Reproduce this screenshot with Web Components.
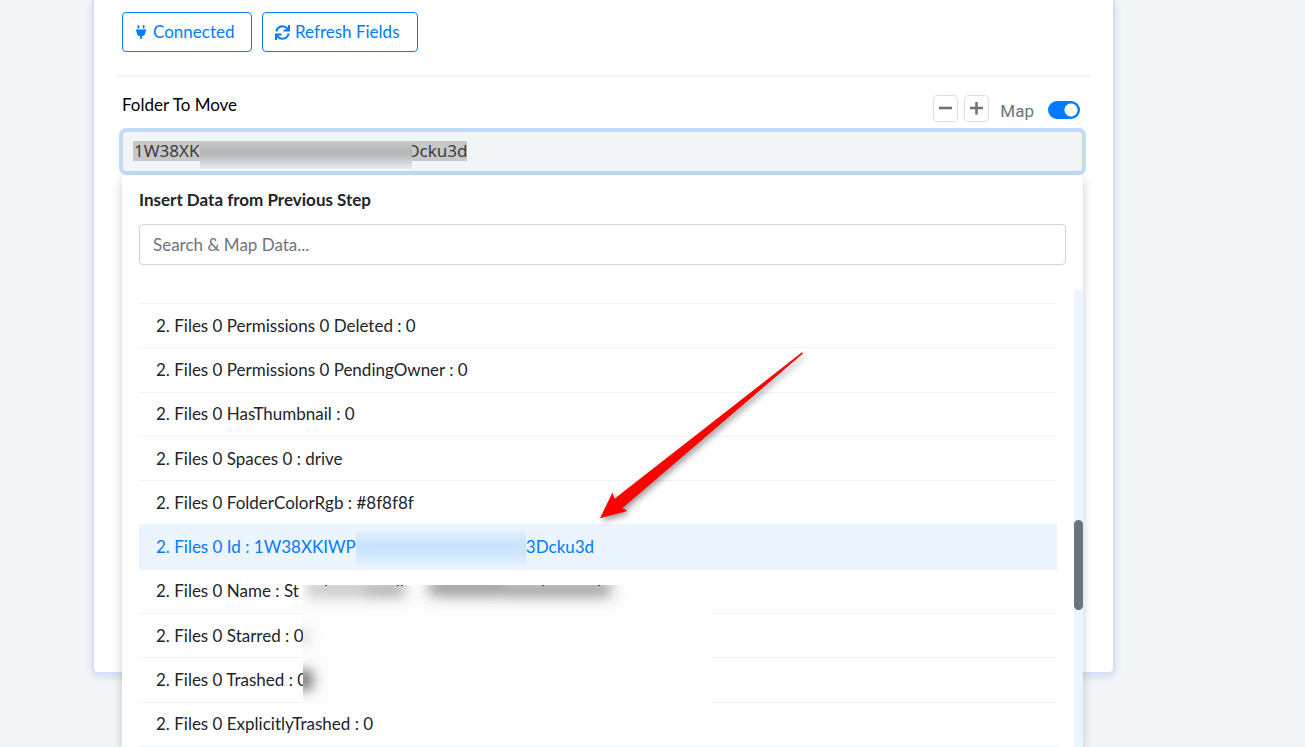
<!DOCTYPE html>
<html lang="en">
<head>
<meta charset="utf-8">
<title>Workflow step</title>
<style>
body { margin: 0; height: 100vh; overflow: hidden; background: #f3f6f9; color: #212529; font: 17px/24px Lato, "Open Sans", sans-serif; }
</style>
</head>
<body>
<step-card>
  <step-actions></step-actions>
  <map-field>
    <data-picker></data-picker>
  </map-field>
</step-card>

<script>
class Base extends HTMLElement {
  constructor() {
    super();
    this.attachShadow({ mode: 'open' }).innerHTML = this.constructor.markup;
  }
}

customElements.define('step-card', class extends Base {
  static markup = `
    <style>
      :host { display: block; box-sizing: border-box; height: calc(100vh - 73px); margin: 0 190px 0 92px; padding: 12px 22px;
        background: #fff; border: 2px solid #d3e0fd; border-top: 0; border-radius: 0 0 6px 6px; box-shadow: 0 3px 8px rgba(60,80,110,.16); }
    </style>
    <slot></slot>`;
});

customElements.define('step-actions', class extends Base {
  static markup = `
    <style>
      :host { display: flex; gap: 10px; padding: 0 6px 23px; border-bottom: 2px solid #eef6ff; }
      button { display: flex; align-items: center; box-sizing: border-box; height: 40px; padding: 0 12px; background: #fff;
        border: 1px solid #007bff; border-radius: 4px; color: #007bff; font: inherit; white-space: nowrap; }
      .plug { min-width: 130px; gap: 6px; }
      .sync { min-width: 156px; gap: 5px; }
      svg { fill: currentColor; flex: none; }
    </style>
    <button type="button" class="plug"><svg width="12" height="14" viewBox="0 0 384 512" aria-hidden="true"><path d="M320,32a32,32,0,0,0-64,0v96h64Zm48,128H16A16,16,0,0,0,0,176v32a16,16,0,0,0,16,16H32v32A160.07,160.07,0,0,0,160,412.8V512h64V412.8A160.07,160.07,0,0,0,352,256V224h16a16,16,0,0,0,16-16V176A16,16,0,0,0,368,160ZM128,32a32,32,0,0,0-64,0v96h64Z"/></svg>Connected</button>
    <button type="button" class="sync"><svg width="15" height="15" viewBox="0 0 512 512" aria-hidden="true"><path d="M440.65 12.57l4 82.77A247.16 247.16 0 0 0 255.83 8C134.73 8 33.91 94.92 12.29 209.82A12 12 0 0 0 24.09 224h49.05a12 12 0 0 0 11.67-9.26 175.91 175.91 0 0 1 317-56.94l-101.46-4.86a12 12 0 0 0-12.57 12v47.41a12 12 0 0 0 12 12H500a12 12 0 0 0 12-12V12a12 12 0 0 0-12-12h-47.37a12 12 0 0 0-11.98 12.57zM255.83 432a175.61 175.61 0 0 1-146-77.8l101.8 4.87a12 12 0 0 0 12.57-12v-47.4a12 12 0 0 0-12-12H12a12 12 0 0 0-12 12V500a12 12 0 0 0 12 12h47.35a12 12 0 0 0 12-12.6l-4.15-82.57A247.17 247.17 0 0 0 255.83 504c121.11 0 221.93-86.92 243.55-201.82a12 12 0 0 0-11.8-14.18h-49.05a12 12 0 0 0-11.67 9.26A175.86 175.86 0 0 1 255.83 432z"/></svg>Refresh Fields</button>`;
});

customElements.define('map-field', class extends Base {
  static markup = `
    <style>
      :host { display: block; padding: 16px 8px 0 6px; }
      .head { display: flex; align-items: flex-start; height: 38px; color: #000; }
      .tools { display: flex; align-items: flex-start; gap: 6px; margin-left: auto; padding: 2px 3px 0 0; }
      button { display: grid; place-items: center; width: 25px; height: 27px; padding: 0; background: #fff; border: 1px solid #dee2e6; border-radius: 4px; color: #6c757d; }
      .switch { display: flex; align-items: flex-start; gap: 14px; padding: 4px 0 0 5px; color: #6c757d; font-family: Roboto, sans-serif; }
      .switch input { appearance: none; display: block; box-sizing: border-box; width: 32px; height: 18px; margin: 2px 0 0; border-radius: 9px;
        background: radial-gradient(circle at 23px 9px, #fff 6px, #007bff 7px); }
      .box { position: relative; }
      .value { display: block; box-sizing: border-box; width: 100%; height: 41px; padding: 0 11px 2px; border: 1px solid #ced4da; border-radius: 4px; outline: 0;
        box-shadow: 0 0 0 3px #bfdeff; color: #383c40; font: 17px/24px "Noto Sans", sans-serif;
        background: linear-gradient(#c8c8c8, #c8c8c8) 10px 9px / 334px 20px no-repeat #f3f6f9; }
      .blur { position: absolute; left: 78px; top: 12px; width: 212px; height: 26px;
        background: linear-gradient(#c4c5c6, #b5b6b7 30%, #babbbc 50%, #d3d6d8 75%, #e6eaed); }
    </style>
    <div class="head">
      <label for="value">Folder To Move</label>
      <div class="tools">
        <button type="button" aria-label="Remove"><svg width="13" height="13" viewBox="0 0 13 13"><path d="M0 6h13" stroke="currentColor" stroke-width="2.6"/></svg></button>
        <button type="button" aria-label="Add"><svg width="13" height="13" viewBox="0 0 13 13"><path d="M0 6h13M6.5 0v12.5" stroke="currentColor" stroke-width="2.6"/></svg></button>
        <label class="switch">Map<input type="checkbox" role="switch" checked></label>
      </div>
    </div>
    <div class="box">
      <input id="value" class="value" type="text">
      <span class="blur"></span>
      <slot></slot>
    </div>`;
  connectedCallback() {
    this.shadowRoot.getElementById('value').value = '1W38XK' + '\u00a0'.repeat(47) + 'Dcku3d';
  }
});

customElements.define('data-picker', class extends Base {
  static markup = `
    <style>
      :host { position: absolute; top: 44px; left: 0; right: 0; display: block; background: #fff; box-shadow: 0 4px 10px rgba(0,0,0,.2); }
      .top { padding: 13px 17px 25px; }
      label { display: block; margin-bottom: 12px; font-weight: 700; }
      input { display: block; box-sizing: border-box; width: 100%; height: 41px; padding: 0 13px; border: 1px solid #ced4da; border-radius: 4px; background: #fff; font: inherit; }
      input::placeholder { color: #6c757d; opacity: 1; }
      .scroll { display: flex; justify-content: space-between; }
      .list { position: relative; flex: 1; margin: 13px 17px 0; }
      ul { display: grid; grid-template-rows: repeat(10, 1fr); height: 443px; margin: 0; padding: 0; list-style: none; border-top: 1px solid #ecf5ff; }
      li { display: grid; border-bottom: 1px solid #ecf5ff; }
      li button { display: flex; align-items: center; padding: 0 17px; border: 0; background: none; color: #212529; font: inherit; white-space: pre; }
      li.on button { background: #ecf5ff; color: #007bff; }
      .start { min-width: 199px; }
      .gap { align-self: flex-end; width: 170px; height: 35px; margin-bottom: 3px; background: linear-gradient(#e2f0ff, #cbe3ff 40%, #cde5ff 60%, #e6f2ff); }
      .bar { width: 9px; background: #ecf5ff; }
      .bar i { display: block; height: 90px; margin-top: 230px; border-radius: 5px; background: #6c757d; }
      .haze { position: absolute; left: 164px; top: 282px; }
      .arrow { position: absolute; left: 451px; top: 36px; filter: drop-shadow(2px 3px 3px rgba(0,0,0,.4)); }
    </style>
    <div class="top">
      <label for="q">Insert Data from Previous Step</label>
      <input id="q" type="text" placeholder="Search &amp; Map Data...">
    </div>
    <div class="scroll">
      <div class="list">
        <ul>
          <li><button type="button">2. Files 0 Permissions 0 Deleted : 0</button></li>
          <li><button type="button">2. Files 0 Permissions 0 PendingOwner : 0</button></li>
          <li><button type="button">2. Files 0 HasThumbnail : 0</button></li>
          <li><button type="button">2. Files 0 Spaces 0 : drive</button></li>
          <li><button type="button">2. Files 0 FolderColorRgb : #8f8f8f</button></li>
          <li class="on"><button type="button"><span class="start">2. Files 0 Id : 1W38XKIWP</span><span class="gap"></span>3Dcku3d</button></li>
          <li><button type="button">2. Files 0 Name : St</button></li>
          <li><button type="button">2. Files 0 Starred : 0</button></li>
          <li><button type="button">2. Files 0 Trashed : 0</button></li>
          <li><button type="button">2. Files 0 ExplicitlyTrashed : 0</button></li>
        </ul>
        <svg class="haze" width="409" height="128" viewBox="0 0 409 128" aria-hidden="true">
          <defs><filter id="b" filterUnits="userSpaceOnUse" x="-40" y="-40" width="490" height="210"><feGaussianBlur stdDeviation="7"/></filter></defs>
          <rect width="409" height="128" fill="#fdfdfd"/>
          <g filter="url(#b)" fill="#444">
            <rect x="4" y="-4" width="60" height="16" opacity=".3"/>
            <rect x="64" y="-4" width="38" height="16" opacity=".42"/>
            <rect x="126" y="-6" width="74" height="17" opacity=".55"/>
            <rect x="200" y="-4" width="108" height="16" opacity=".5"/>
            <rect x="-6" y="46" width="10" height="12" opacity=".3"/>
            <rect x="-6" y="86" width="14" height="18"/>
          </g>
          <path d="M22 0h2M94 0h2M98 0h2M239 0h2M295 0h2" stroke="#444" stroke-width="2"/>
        </svg>
        <svg class="arrow" width="230" height="190" viewBox="590 340 230 190" aria-hidden="true">
          <path d="M600 519.300L612.500 493.500L614.500 499.700L802 353.300L803 354.500L622.500 509L627.500 512Z" fill="#f00"/>
        </svg>
      </div>
      <div class="bar"><i></i></div>
    </div>`;
});
</script>
</body>
</html>
